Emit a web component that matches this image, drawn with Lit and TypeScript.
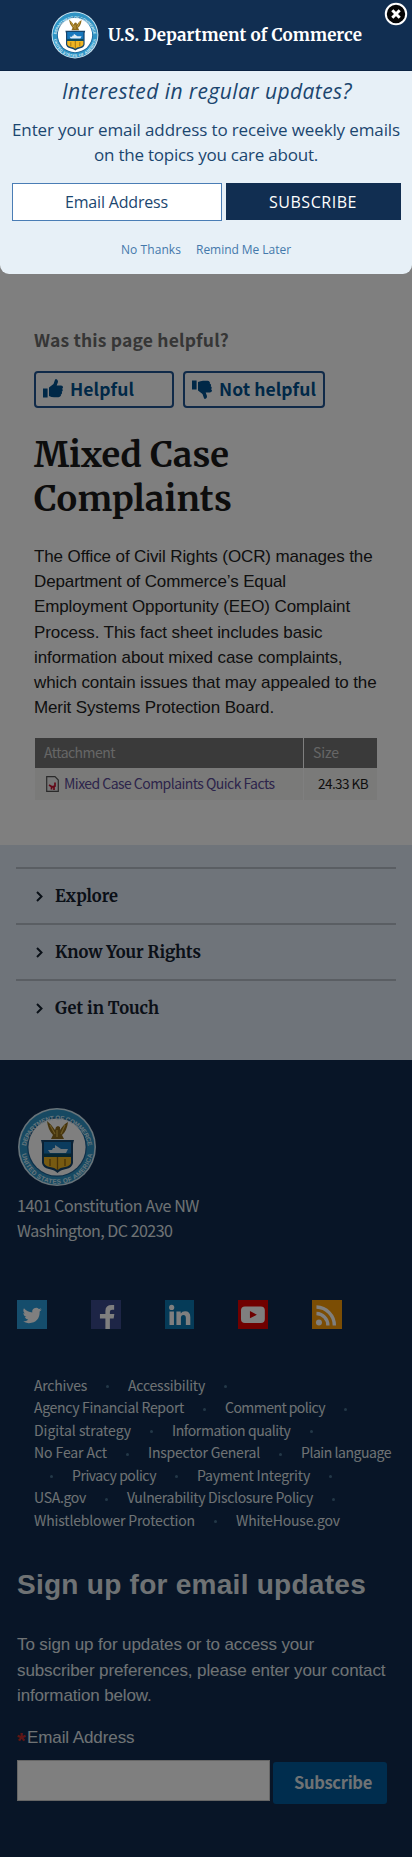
import { LitElement, html, svg, css } from "lit";
import { customElement, property } from "lit/decorators.js";

/* One line of text whose tracking is adjusted so that it spans a given width. */
@customElement("fit-line")
class FitLine extends LitElement {
  @property({ type: Number }) w = 100;
  @property() text = "";
  static styles = css`
    :host { display: block; white-space: nowrap; }
    span { display: inline-block; }
  `;
  updated() {
    const s = this.renderRoot.querySelector("span") as HTMLElement;
    s.style.letterSpacing = "0px";
    const n = s.getBoundingClientRect().width;
    const gap = (this.w - n) / this.text.length;
    s.style.letterSpacing = gap.toFixed(3) + "px";
  }
  render() {
    return html`<span>${this.text}</span>`;
  }
}

const line = (text: string, w: number, cls = "") =>
  html`<fit-line class=${cls} .text=${text} .w=${w}></fit-line>`;

@customElement("commerce-seal")
class CommerceSeal extends LitElement {
  static styles = css`
    :host { display: block; }
    svg { display: block; width: 100%; height: 100%; }
    text { font: bold 6.4px "Liberation Sans", sans-serif; fill: #d3ebf7; }
  `;
  render() {
    return html`<svg viewBox="0 0 80 80">
      <defs>
        <path id="up" d="M8.700 42a31.400 31.400 0 0 1 62.600 0" />
        <path id="down" d="M4.200 41a35.800 35.800 0 0 0 71.600 0" />
      </defs>
      <circle cx="40" cy="40" r="39" fill="#cfe6f2" />
      <circle cx="40" cy="40" r="37.400" fill="#2f93c4" />
      <circle cx="40" cy="40" r="29.800" fill="#1c5f92" />
      <circle cx="40" cy="40" r="28.600" fill="#fff" />
      <text><textPath href="#up" startOffset="50%" text-anchor="middle" textLength="88">DEPARTMENT OF COMMERCE</textPath></text>
      <text><textPath href="#down" startOffset="50%" text-anchor="middle" textLength="100">UNITED STATES OF AMERICA</textPath></text>
      <path d="M30 14q5 4 8 9l1-3 2-1 2 1v3q4-6 8-8-1 9-6 13l2 4H34l2-4q-5-5-6-14z" fill="#8d6a1c" />
      <path d="M33 18l5 9M48 18l-4 9M40 23v7" stroke="#d9b44c" stroke-width="1.200" fill="none" />
      <path d="M24 33h33l-1 4v19q-1 5-7 6-6 1-8.500 4-2.500-3-8.500-4-6-1-7-6V37z" fill="#16446b" />
      <path d="M27 35h27v14H27z" fill="#1878bd" />
      <path d="M31 43h4l1-2h2v-3l6 4h7l-2 4H33z" fill="#dcecf5" />
      <path d="M27 46.500h27v4H27z" fill="#0c4c63" />
      <path d="M27 50h27v6q-1 3-6 4-5 .5-7.500 3-3-2.500-7.500-3-5-1-6-4z" fill="#efb422" />
      <path d="M40.500 50v13M33 52v7M48 52v7" stroke="#8f6410" stroke-width="1.300" />
    </svg>`;
  }
}

const thumb = svg`<path d="M0 9.500h4.600v9H0zM6 8.500L10.500 5 12 .8q.6-1.200 2-.4 1.400 1.200.8 3.200L13.700 6.600H18q2 .3 2 1.700 0 1-.9 1.500.8.800.600 1.700-.2.900-1 1.300.500.800.2 1.600-.3.800-1.100 1.100.3 1-.1 1.600-.8 1.100-2.200 1.100H11q-2.500-.2-5-1.300z"/>`;

const socials = [
  ["tw", svg`<path fill="#fff" d="M25 9.500q-1 .4-2.200.6 1.200-.8 1.600-2-1.200.6-2.400.9a3.900 3.900 0 0 0-6.600 3.500Q10.500 12.300 7 8.300q-1.700 3.200 1.200 5.300-1 0-1.800-.5.100 2.900 3.100 3.900-.9.200-1.700.1.800 2.400 3.600 2.700-2.500 1.900-5.800 1.600Q9 23.300 12 23.200 23 22.500 22.800 11.500 24.100 10.700 25 9.500z"/>`],
  ["fb", svg`<path fill="#fff" d="M14.500 29V18.500H9v-4.500h5.500V11q0-6 6.500-6h2.300V9.800h-2q-2.300 0-2.300 1.900V14h4.500l-.7 4.500H19V29z"/>`],
  ["in", svg`<path fill="#fff" d="M4.500 11.500h4.500V25H4.500zM11.500 11.500h4.300v2q1.400-2.300 4.400-2.300 5.300 0 5.300 6V25H21v-7q0-3-2.400-3-2.600 0-2.600 3V25h-4.500z"/><circle cx="6.700" cy="7.400" r="2.600" fill="#fff"/>`],
  ["yt", svg`<rect x="3" y="6.500" width="24" height="16.500" rx="4" fill="#fff"/><path fill="#d00" d="M12 11l7 3.700-7 3.700z"/>`],
  ["rss", svg`<circle cx="7" cy="22.500" r="3" fill="#fff"/><path d="M4.500 13.500a12 12 0 0 1 11.500 12M4.500 7A18.500 18.500 0 0 1 22.500 25.500" fill="none" stroke="#fff" stroke-width="3.400"/>`],
] as const;

const linkRows: (string | number)[][][] = [
  [["Archives", 53], ["Accessibility", 77], []],
  [["Agency Financial Report", 150], ["Comment policy", 100], []],
  [["Digital strategy", 97], ["Information quality", 118.5], []],
  [["No Fear Act", 73], ["Inspector General", 112], ["Plain language", 90]],
  [[], ["Privacy policy", 84], ["Payment Integrity", 113], []],
  [["USA.gov", 52], ["Vulnerability Disclosure Policy", 186], []],
  [["Whistleblower Protection", 161], ["WhiteHouse.gov", 104]],
];

@customElement("app-root")
class AppRoot extends LitElement {
  static styles = css`
    :host { display: block; position: relative; width: 412px; height: 1857px; overflow: hidden; background: #fff; font-family: "Noto Sans CJK SC", sans-serif; }
    * { box-sizing: border-box; }
    h1, h2, p { margin: 0; font-weight: inherit; }
    .serif { font-family: Merriweather, "DejaVu Serif Condensed", "DejaVu Serif", serif; font-weight: bold; }

    .shade { position: absolute; inset: 0; background: rgba(0, 0, 0, 0.5); }
    .modal { position: absolute; top: 0; left: 0; width: 412px; height: 274px; background: #e7f0f7; border-radius: 0 0 9px 9px; overflow: hidden; font-family: "Open Sans", sans-serif; color: #1b466f; }
    .brand { height: 71px; background: #112e51; border-bottom: 1px solid #0b2342; display: flex; align-items: center; padding-left: 51px; gap: 9px; }
    .brand commerce-seal { width: 48px; height: 48px; }
    .brand .name { color: #fff; font-size: 17px; line-height: 24px; }
    .close { position: absolute; top: 2px; right: 4px; width: 24px; height: 24px; }
    .ask { padding-left: 62px; font-size: 21px; font-style: italic; line-height: 30px; margin-top: 5px; }
    .lead { font-size: 17px; line-height: 25px; margin-top: 11px; }
    .l1 { padding-left: 12px; } .l2 { padding-left: 94px; }
    .form { display: flex; gap: 4px; margin: 16px 11px 0 12px; font-size: 16px; }
    .field { width: 210px; height: 38px; border: 1px solid #4a7db5; background: #fff; display: flex; justify-content: center; line-height: 36px; padding-right: 1px; }
    .go { flex: 1; height: 37px; background: #112e51; color: #fff; display: flex; justify-content: center; line-height: 38px; padding-right: 1px; }
    .later { display: flex; gap: 15px; padding-left: 121px; margin-top: 19px; font-size: 12px; line-height: 20px; color: #4478ab; }

    main { height: 845px; padding: 328px 34px 0; }
    .helpq { font-size: 17.500px; line-height: 24px; font-weight: bold; color: #6c6c6c; }
    .votes { display: flex; gap: 9px; margin-top: 19px; height: 37px; }
    .vote { width: 140px; border: 2px solid #205493; border-radius: 4px; padding-left: 7px; display: flex; gap: 7px; align-items: center; color: #00508f; font-size: 17.500px; font-weight: bold; line-height: 31px; }
    .vote.no { width: 142px; }
    .vote fit-line { margin-top: -2px; }
    .vote svg { width: 20px; height: 20px; fill: #00508f; margin-top: -1px; }
    .flip { transform: scaleY(-1); }
    h1 { margin-top: 25px; font-size: 34.500px; line-height: 44px; color: #1b1b1b; }
    .body { margin-top: 23px; font: 17px/25.200px "Liberation Sans", sans-serif; color: #212121; }
    .table { margin: 17.600px 0 0 1px; display: grid; grid-template-columns: 268px 73px; column-gap: 1px; width: 342px; font-size: 14px; }
    .th { background: #747474; color: #ccc; height: 30px; line-height: 28px; padding-left: 9px; box-shadow: 1px 0 0 #fff; }
    .th + .th { box-shadow: none; }
    .td { background: #f4f4f2; height: 32px; line-height: 28px; display: flex; align-items: center; padding: 0 0 2px 11px; gap: 5px; color: #5a4a96; }
    .td.size { color: #1b1b1b; padding-left: 14px; font-size: 13.500px; }
    .td svg { width: 13px; height: 16px; margin-top: 2px; }

    nav { height: 215px; background: #dfe8f5; padding: 22px 16px 0; }
    .row { height: 56px; border-top: 2px solid #b5bcc7; display: flex; align-items: center; padding: 1px 0 0 20px; gap: 12px; font-size: 16.500px; line-height: 24px; color: #14202e; }
    .row svg { width: 7px; height: 11px; }

    footer { height: 797px; background: #102a4e; padding: 47px 17px 0; color: #dfe4e8; font-size: 17px; }
    footer commerce-seal { width: 80px; height: 80px; }
    .addr { margin-top: 6px; font-size: 16px; line-height: 25px; }
    .social { display: flex; margin-top: 57px; gap: 44px; }
    .social svg { width: 29.800px; height: 29px; }
    .tw { background: #2b9bd8; } .fb { background: #3b4a8c; } .in { background: #0a77b0; } .yt { background: #e00000; } .rss { background: #f79a08; }
    .links { margin: 44.700px 0 0 17px; font-size: 14px; line-height: 22.500px; }
    .lr { display: flex; height: 22.500px; }
    .lr.shift { margin-left: -3px; }
    .dot { width: 41px; display: flex; justify-content: center; align-items: center; }
    .dot::before { content: ""; width: 3px; height: 3px; border-radius: 50%; background: #47708f; margin-top: 4px; }
    h2 { margin-top: 36.800px; font: bold 28px/34px "Liberation Sans", sans-serif; }
    .arial { font-family: "Liberation Sans", sans-serif; line-height: 25.400px; }
    .txt { margin-top: 30.300px; }
    .lab { display: flex; margin-top: 16.700px; }
    .star { color: #c02a2a; width: 10px; font-size: 22px; font-weight: bold; margin-top: 3px; height: 22px; }
    .sub { display: flex; gap: 3px; margin-top: 9px; }
    .inp { width: 253px; height: 41px; background: #fff; border: 1px solid #ccc; }
    .btn { width: 114px; height: 42px; margin-top: 2px; border-radius: 3px; background: #005a9c; font-weight: bold; font-size: 16.500px; line-height: 41px; padding-left: 21px; }
  `;

  render() {
    const row = (t: string, w: number) => html`<div class="row">
      <svg viewBox="0 0 7 11"><path d="M1 1l4.500 4.500L1 10" fill="none" stroke="#14202e" stroke-width="2"/></svg>
      ${line(t, w, "serif")}
    </div>`;
    return html`
      <main>
        ${line("Was this page helpful?", 195, "helpq")}
        <div class="votes">
          <div class="vote"><svg viewBox="0 0 20 20">${thumb}</svg>${line("Helpful", 64)}</div>
          <div class="vote no"><svg class="flip" viewBox="0 0 20 20">${thumb}</svg>${line("Not helpful", 97)}</div>
        </div>
        <h1>${line("Mixed Case", 195, "serif")}${line("Complaints", 198, "serif")}</h1>
        <div class="body">
          ${line("The Office of Civil Rights (OCR) manages the", 338.5)}
          ${line("Department of Commerce’s Equal", 252)}
          ${line("Employment Opportunity (EEO) Complaint", 316)}
          ${line("Process. This fact sheet includes basic", 288.5)}
          ${line("information about mixed case complaints,", 308.5)}
          ${line("which contain issues that may appealed to the", 342.5)}
          ${line("Merit Systems Protection Board.", 240)}
        </div>
        <div class="table">
          <div class="th">${line("Attachment", 71)}</div>
          <div class="th">${line("Size", 26)}</div>
          <div class="td">
            <svg viewBox="0 0 13 16"><path d="M.7.700h8.300l3.300 3.300v11.300H.700z" fill="#eee" stroke="#555" stroke-width="1.200"/><path d="M3 9l2.500 1.500v3M5 11l4-1V6.500M8 10v4" fill="none" stroke="#c8102e" stroke-width="1.700"/></svg>
            ${line("Mixed Case Complaints Quick Facts", 210.5)}
          </div>
          <div class="td size">${line("24.33 KB", 50)}</div>
        </div>
      </main>
      <nav>${row("Explore", 63)}${row("Know Your Rights", 146)}${row("Get in Touch", 104)}</nav>
      <footer>
        <commerce-seal></commerce-seal>
        <div class="addr">${line("1401 Constitution Ave NW", 182)}${line("Washington, DC 20230", 155.5)}</div>
        <div class="social">${socials.map(([c, p]) => html`<svg class=${c} viewBox="0 0 30 29">${p}</svg>`)}</div>
        <div class="links">
          ${linkRows.map((r) => html`<div class="lr ${r[0].length ? "" : "shift"}">
            ${r.map((l, i) => html`${i ? html`<div class="dot"></div>` : ""}${l.length ? line(l[0] as string, l[1] as number) : ""}`)}
          </div>`)}
        </div>
        <h2>${line("Sign up for email updates", 349)}</h2>
        <div class="txt arial">
          ${line("To sign up for updates or to access your", 297)}
          ${line("subscriber preferences, please enter your contact", 368.5)}
          ${line("information below.", 134.5)}
        </div>
        <div class="lab arial"><span class="star">*</span>${line("Email Address", 107.5)}</div>
        <div class="sub"><div class="inp"></div><div class="btn">${line("Subscribe", 78)}</div></div>
      </footer>
      <div class="shade"></div>
      <div class="modal">
        <div class="brand"><commerce-seal></commerce-seal>${line("U.S. Department of Commerce", 254, "serif name")}</div>
        <svg class="close" viewBox="0 0 24 24"><circle cx="12" cy="12" r="10.200" fill="#050505" stroke="#fff" stroke-width="2"/><path d="M8.300 8.300l7.400 7.400M15.700 8.300l-7.400 7.400" stroke="#fff" stroke-width="3"/></svg>
        ${line("Interested in regular updates?", 290, "ask")}
        <div class="lead">${line("Enter your email address to receive weekly emails", 388, "l1")}${line("on the topics you care about.", 224, "l2")}</div>
        <div class="form"><div class="field">${line("Email Address", 103)}</div><div class="go">${line("SUBSCRIBE", 88)}</div></div>
        <div class="later">${line("No Thanks", 60)}${line("Remind Me Later", 95)}</div>
      </div>
    `;
  }
}
